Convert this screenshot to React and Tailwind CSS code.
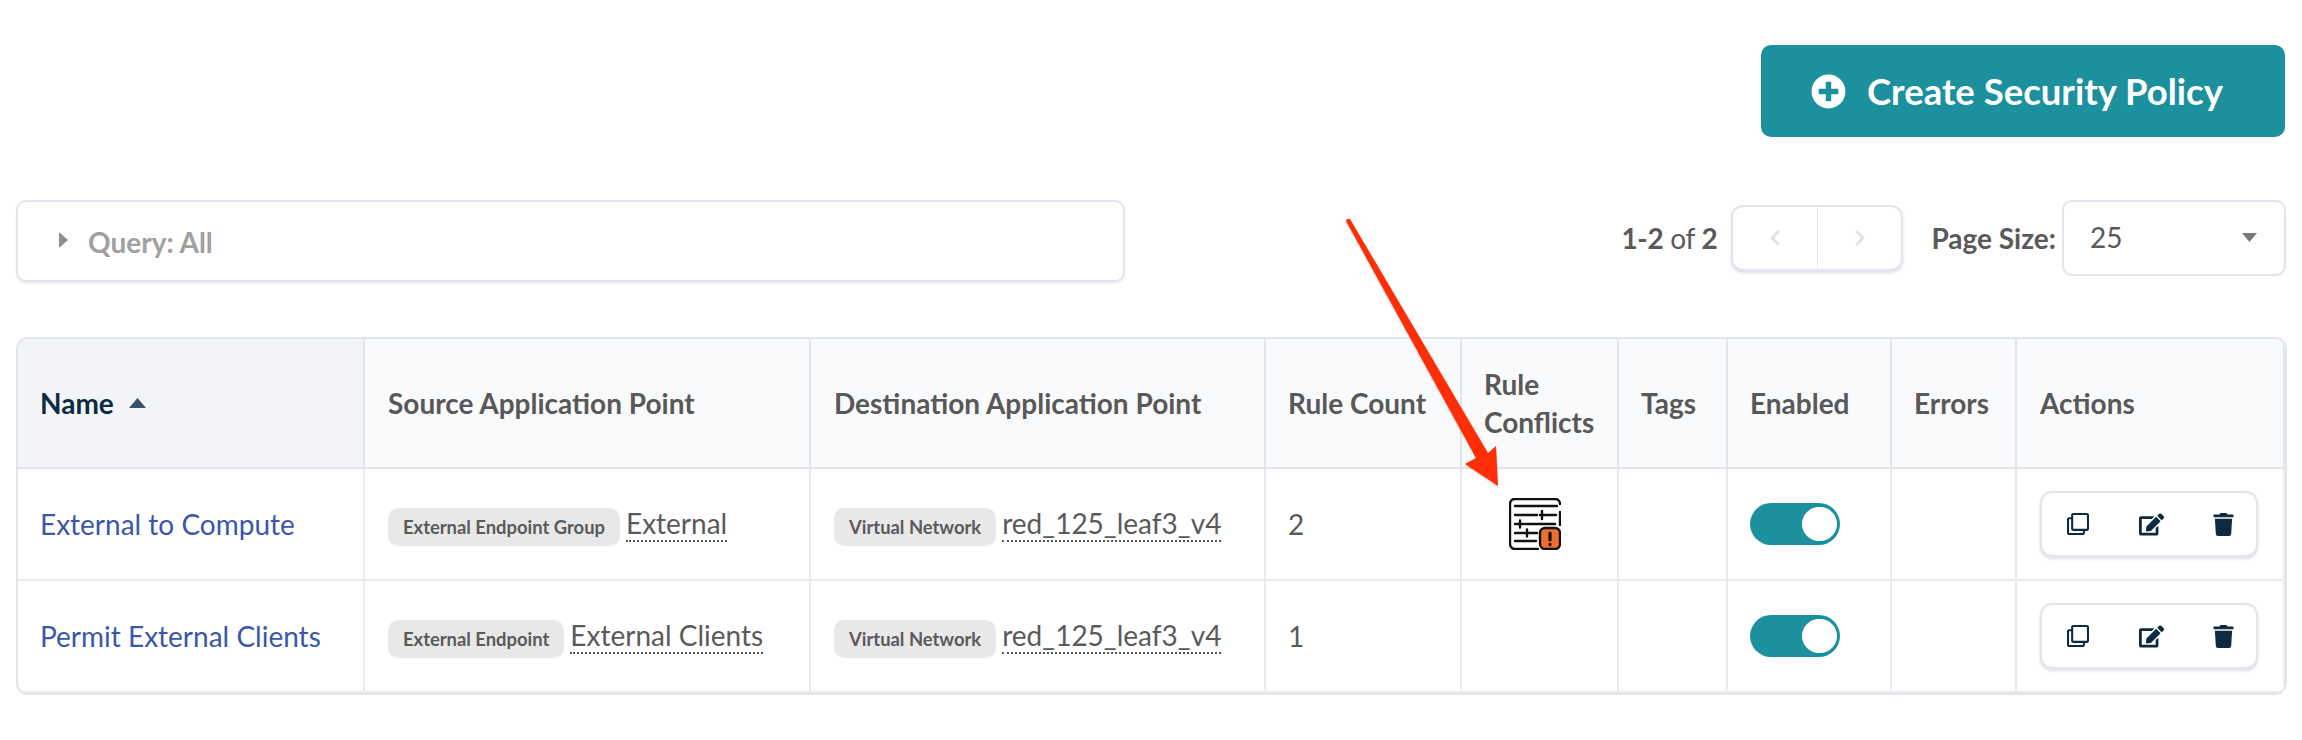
import React from "react";
import { FaPlusCircle, FaRegClone, FaEdit, FaTrash, FaChevronLeft, FaChevronRight } from "react-icons/fa";

function Badge({ children }) {
  return (
    <span className="inline-flex h-[38px] items-center rounded-[10px] bg-[#e8e8e8] px-[15px] align-middle text-[18.4px] font-bold leading-none text-[#5a5a5a]">
      {children}
    </span>
  );
}

function Ref({ children }) {
  return (
    <span className="ml-[6px] inline-block -translate-y-[2px] border-b-2 border-dotted border-[#555] align-middle text-[28px] leading-[33px] text-[#5a5a5a]">
      {children}
    </span>
  );
}

function Toggle() {
  return (
    <div className="-ml-[1px] flex h-[42px] w-[90px] items-center justify-end rounded-full bg-[#1c909c] pr-[3px]">
      <div className="h-[34px] w-[35px] rounded-full bg-white" />
    </div>
  );
}

function Actions() {
  return (
    <div className="flex h-[66px] w-[218px] items-center justify-between rounded-[12px] border-2 border-[#e2e5ec] bg-white pl-[25px] pr-[22px] text-[#0d2a3f] shadow-[0_2px_3px_rgba(30,50,90,0.15)]">
      <FaRegClone className="h-[22px] w-[22px]" />
      <FaEdit className="h-[25px] w-[25px]" />
      <FaTrash className="h-[23px] w-[21px]" />
    </div>
  );
}

function ConflictIcon() {
  return (
    <svg width="52" height="52" viewBox="0 0 52 52" fill="none" stroke="#111" strokeWidth="2.4" strokeLinecap="round">
      <path d="M29 51H6a5 5 0 0 1-5-5V6a5 5 0 0 1 5-5h40a5 5 0 0 1 5 5" />
      <path d="M51 14v13" />
      <path d="M6 8h42M6 17h22M31 17h16M33 13v8M6 26h9M17 26h29M11 22.5v7M6 35h22M18 31.5v7M6 43h21M24 35h3" />
      <rect x="31" y="30" width="20" height="21" rx="5" fill="#ee6f2d" />
      <path d="M41 35v7" strokeWidth="3.2" />
      <path d="M41 46.4v.2" strokeWidth="3.2" />
    </svg>
  );
}

const th = "border-b-2 border-r-2 border-[#e2e5ec] px-[22px] text-left align-middle text-[28px] font-bold leading-[38px] text-[#585858]";
const td = "border-b-2 border-r-2 border-[#e9ebef] px-[22px] align-middle text-[28px] text-[#5a5a5a]";

const rows = [
  { name: "External to Compute", kind: "External Endpoint Group", ref: "External", count: "2", conflict: true },
  { name: "Permit External Clients", kind: "External Endpoint", ref: "External Clients", count: "1", conflict: false },
];

export default function App() {
  return (
    <div className="relative h-[740px] w-[2302px] overflow-hidden bg-white pl-4 pr-[15px] pt-[45px] [font-family:Lato,sans-serif]">
      <div className="flex justify-end pr-[2px]">
        <button className="flex h-[92px] w-[524px] items-center rounded-[10px] bg-[#1c909c] pl-[50px] text-[36.5px] font-bold text-white">
          <FaPlusCircle className="mr-[21px] h-[35px] w-[35px]" />
          Create Security Policy
        </button>
      </div>

      <div className="mt-[63px] flex items-start justify-between pr-[1px]">
        <div className="flex h-[82px] w-[1109px] items-center rounded-[10px] border-2 border-[#e2e5ec] bg-white pl-[40px] pt-[2px] text-[28px] font-bold text-[#a0a0a0] shadow-[0_2px_2px_rgba(30,50,90,0.08)]">
          <svg width="10" height="16" viewBox="0 0 10 16" className="mr-[20px] -translate-y-[2px]">
            <path d="M1 0l9 8-9 8z" fill="#8f8f8f" />
          </svg>
          Query: All
        </div>
        <div className="flex items-center">
          <div className="mr-[14px] text-[28px] tracking-[-0.3px] text-[#5a5a5a]">
            <b>1-2</b> of <b>2</b>
          </div>
          <div className="mr-[28px] flex h-[66px] w-[172px] rounded-[12px] border-2 border-[#e2e5ec] bg-white text-[#e2e2e2] shadow-[0_2px_3px_rgba(30,50,90,0.15)]">
            <div className="flex flex-1 items-center justify-center border-r border-[#e9ebef]">
              <FaChevronLeft className="h-[18px] w-[14px]" />
            </div>
            <div className="flex flex-1 items-center justify-center">
              <FaChevronRight className="h-[18px] w-[14px]" />
            </div>
          </div>
          <span className="mr-[6px] text-[28px] font-bold text-[#5a5a5a]">Page Size:</span>
          <div className="flex h-[76px] w-[224px] items-center justify-between rounded-[10px] border-2 border-[#e2e5ec] bg-white pb-[2px] pl-[26px] pr-[27px] text-[28px] text-[#5a5a5a]">
            25
            <svg width="15" height="9" viewBox="0 0 15 9"><path d="M0 0h15L7.5 9z" fill="#777" /></svg>
          </div>
        </div>
      </div>

      <div className="mt-[55px] overflow-hidden rounded-[12px] border-2 border-[#e2e5ec]">
        <table className="w-full table-fixed border-separate border-spacing-0">
          <colgroup>
            <col className="w-[347px]" />
            <col className="w-[446px]" />
            <col className="w-[455px]" />
            <col className="w-[196px]" />
            <col className="w-[157px]" />
            <col className="w-[109px]" />
            <col className="w-[164px]" />
            <col className="w-[125px]" />
            <col />
          </colgroup>
          <thead>
            <tr className="h-[130px] bg-[#f9fafc]">
              <th className={`${th} bg-[#f2f4f8] !text-[#0d2a3f]`}>
                <span className="inline-flex items-center">
                  Name
                  <svg width="17" height="10" viewBox="0 0 17 10" className="ml-[15px]"><path d="M8.5 0L17 10H0z" fill="#3a5068" /></svg>
                </span>
              </th>
              <th className={`${th} !pl-[23px]`}>Source Application Point</th>
              <th className={`${th} !pl-[23px]`}>Destination Application Point</th>
              <th className={th}>Rule Count</th>
              <th className={th}>Rule Conflicts</th>
              <th className={th}>Tags</th>
              <th className={th}>Enabled</th>
              <th className={th}>Errors</th>
              <th className={`${th} !pl-[23px] border-r-0`}>Actions</th>
            </tr>
          </thead>
          <tbody>
            {rows.map((r, i) => (
              <tr key={r.name} className="h-[112px]">
                <td className={`${td} !text-[#3b57a9] ${i === 1 ? "border-b-0" : ""}`}>{r.name}</td>
                <td className={`${td} !pl-[23px] whitespace-nowrap ${i === 1 ? "border-b-0" : ""}`}>
                  <Badge>{r.kind}</Badge>
                  <Ref>{r.ref}</Ref>
                </td>
                <td className={`${td} !pl-[23px] whitespace-nowrap ${i === 1 ? "border-b-0" : ""}`}>
                  <Badge>Virtual Network</Badge>
                  <Ref>red_125_leaf3_v4</Ref>
                </td>
                <td className={`${td} ${i === 1 ? "border-b-0" : ""}`}>{r.count}</td>
                <td className={`${td} !pl-[47px] ${i === 1 ? "border-b-0" : ""}`}>{r.conflict && <ConflictIcon />}</td>
                <td className={`${td} ${i === 1 ? "border-b-0" : ""}`} />
                <td className={`${td} !pl-[23px] ${i === 1 ? "border-b-0" : ""}`}><Toggle /></td>
                <td className={`${td} ${i === 1 ? "border-b-0" : ""}`} />
                <td className={`${td} !pl-[23px] border-r-0 ${i === 1 ? "border-b-0" : ""}`}><Actions /></td>
              </tr>
            ))}
          </tbody>
        </table>
      </div>

      <svg className="pointer-events-none absolute left-0 top-0 drop-shadow-[0_1px_1px_rgba(0,0,0,0.2)]" width="2302" height="740">
        <polygon points="1346,221 1347,219 1350,219 1488,453 1496,446 1498,486 1465,464 1476,458" fill="#ff2e06" />
      </svg>
    </div>
  );
}
